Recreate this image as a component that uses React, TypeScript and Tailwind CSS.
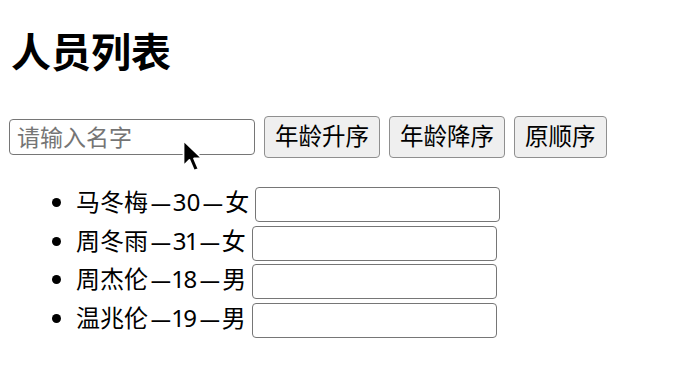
import { useState } from "react";

type Person = { id: number; name: string; age: number; sex: string };

const people: Person[] = [
  { id: 1, name: "马冬梅", age: 30, sex: "女" },
  { id: 2, name: "周冬雨", age: 31, sex: "女" },
  { id: 3, name: "周杰伦", age: 18, sex: "男" },
  { id: 4, name: "温兆伦", age: 19, sex: "男" },
];

function Cursor() {
  return (
    <svg
      className="absolute left-[182px] top-[139px] pointer-events-none"
      width="24"
      height="36"
      viewBox="0 0 16 24"
    >
      <path
        d="M1 1 L1 18 L5 14 L8 21 L11 20 L8 13 L13.5 13 Z"
        fill="#000"
        stroke="#fff"
        strokeWidth="1.2"
        strokeLinejoin="round"
      />
    </svg>
  );
}

function Dash() {
  return <span className="inline-block mx-[8.5px] scale-x-[3.2]">-</span>;
}

export default function App() {
  const [keyword, setKeyword] = useState("");
  const [sortType, setSortType] = useState(0);

  let list = people.filter((p) => p.name.includes(keyword));
  if (sortType) list = [...list].sort((a, b) => (sortType === 1 ? a.age - b.age : b.age - a.age));

  const btn =
    "h-[42px] px-[10px] rounded-[4px] border border-[#8f8f8f] bg-[#efefef] text-[23.5px] text-black leading-none";

  return (
    <div className="relative w-[698px] h-[372px] bg-white text-black font-['Noto_Sans','Noto_Sans_CJK_SC',sans-serif] overflow-hidden">
      <h1 className="pl-[11px] pt-[26px] text-[40px] font-bold leading-[52px]">人员列表</h1>

      <div className="flex items-center mt-[38px] pl-[9px] gap-[9px]">
        <input
          value={keyword}
          onChange={(e) => setKeyword(e.target.value)}
          placeholder="请输入名字"
          className="w-[246px] h-[36px] px-[7px] rounded-[4px] border border-[#767676] text-[23px] placeholder:text-[#757575] outline-none"
        />
        <button className={btn} onClick={() => setSortType(1)}>年龄升序</button>
        <button className={btn} onClick={() => setSortType(2)}>年龄降序</button>
        <button className={btn} onClick={() => setSortType(0)}>原顺序</button>
      </div>

      <ul className="list-disc pl-[76px] mt-[25px] text-[24px] proportional-nums">
        {list.map((p) => (
          <li key={p.id} className="h-[38.5px] leading-[38.5px]">
            {p.name}
            <Dash />
            {p.age}
            <Dash />
            {p.sex}{" "}
            <input
              type="text"
              className="w-[245px] h-[35px] align-middle rounded-[4px] border border-[#767676] outline-none"
            />
          </li>
        ))}
      </ul>

      <Cursor />
    </div>
  );
}
